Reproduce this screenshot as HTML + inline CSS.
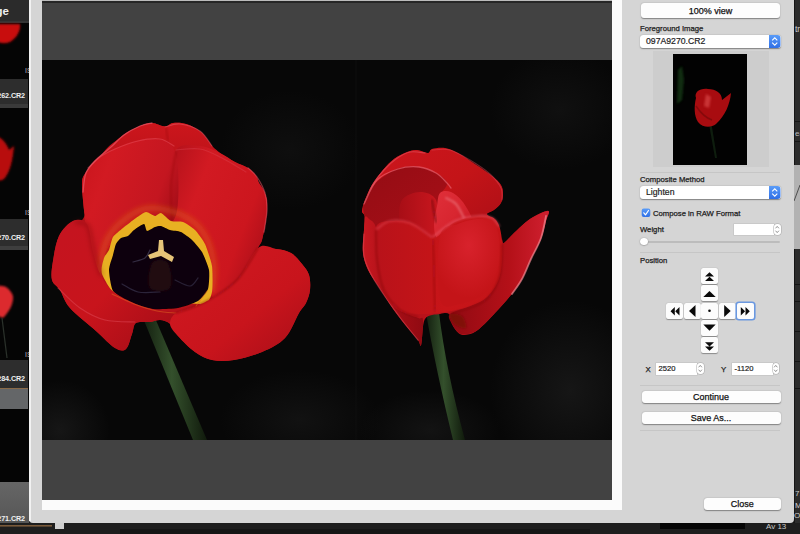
<!DOCTYPE html>
<html><head><meta charset="utf-8">
<style>
*{margin:0;padding:0;box-sizing:border-box}
html,body{width:800px;height:534px;overflow:hidden;background:#1e1e1e;font-family:"Liberation Sans",sans-serif}
.a{position:absolute}
.lab{position:absolute;left:0;width:28px;height:15px;background:#2d2d2d;overflow:hidden}.lab span{position:absolute;right:3px;top:0;color:#f0f0f0;font-size:7.2px;line-height:15px;white-space:nowrap;letter-spacing:-0.1px;font-weight:bold}
.btn{position:absolute;-webkit-text-stroke:0.25px #111;background:#fdfdfd;border-radius:3px;box-shadow:0 0.5px 1.2px rgba(0,0,0,.4);font-size:9px;color:#111;text-align:center;white-space:nowrap}
.lbl{position:absolute;-webkit-text-stroke:0.25px #1c1c1c;font-size:7.7px;color:#1c1c1c;white-space:nowrap;line-height:9px}
.sel{position:absolute;-webkit-text-stroke:0.2px #1e1e1e;background:#fff;border-radius:3px;box-shadow:0 0.5px 1.2px rgba(0,0,0,.4);font-size:8.7px;color:#1e1e1e;padding-left:6px;white-space:nowrap}
.sep{position:absolute;left:640px;width:140px;height:1px;background:#c6c6c6}
.pb{position:absolute;width:17px;height:16px;background:#fcfcfc;border-radius:2px;box-shadow:0 0.5px 1px rgba(0,0,0,.35)}
.inp{position:absolute;-webkit-text-stroke:0.2px #1e1e1e;background:#fff;box-shadow:0 0 0 0.5px #bdbdbd;font-size:7.6px;color:#1e1e1e;padding-left:3px;white-space:nowrap}
.stp{position:absolute;width:6.5px;background:#fff;border-radius:3px;box-shadow:0 0 0 0.5px #a8a8a8}
</style></head>
<body>
<!-- left filmstrip -->
<div class="a" style="left:0;top:0;width:29px;height:534px;background:#050505;overflow:hidden">
  <div class="a" style="left:0;top:0;width:29px;height:21px;background:#2b2b2b"></div><div class="a" style="left:0;top:21px;width:29px;height:2px;background:#353535"></div>
  <div class="a" style="right:20px;top:3.5px;color:#f0f0f0;font-size:11.5px;line-height:14px;font-weight:bold;white-space:nowrap">ge</div>
  <div class="lab" style="top:78.5px;height:25px"><span style="top:9.5px">262.CR2</span></div>
  <div class="a" style="left:0;top:103.5px;width:28px;height:4px;background:#3a3a3a"></div>
  <div class="lab" style="top:219px;height:27px"><span style="top:11px">270.CR2</span></div>
  <div class="a" style="left:0;top:246px;width:28px;height:3.5px;background:#3e3e3e"></div>
  <div class="lab" style="top:360px;height:28px"><span style="top:10.5px">284.CR2</span></div>
  <div class="a" style="left:0;top:388px;width:28px;height:1.2px;background:#8a6a48"></div>
  <div class="a" style="left:0;top:389.2px;width:28px;height:19.6px;background:#646668"></div>
  <div class="a" style="left:25px;top:66px;color:#bbb;font-size:7px;line-height:9px">IS</div>
  <div class="a" style="left:25px;top:208px;color:#bbb;font-size:7px;line-height:9px">IS</div>
  <div class="a" style="left:25px;top:350px;color:#bbb;font-size:7px;line-height:9px">IS</div>
  <div class="a" style="left:0;top:482px;width:29px;height:43px;background:linear-gradient(#666,#555)"></div>
  <div class="lab" style="top:511px;background:transparent"><span>271.CR2</span></div>
  <div class="a" style="left:0;top:525px;width:52px;height:2px;background:#6a4a30"></div>
</div>
<!-- right bg strip -->
<div class="a" style="left:793px;top:0;width:7px;height:534px;background:#2c2c2c"></div>
<div class="a" style="left:793px;top:0;width:2px;height:534px;background:#161616"></div>
<div class="a" style="left:795px;top:24px;color:#cfcfcf;font-size:8.5px;line-height:10px;white-space:nowrap">tre</div>
<div class="a" style="left:795px;top:121px;width:5px;height:1px;background:#151515"></div>
<div class="a" style="left:795px;top:141px;width:5px;height:1px;background:#151515"></div>
<div class="a" style="left:795px;top:129px;color:#bbb;font-size:8px;line-height:10px;white-space:nowrap">ea</div>
<div class="a" style="left:793px;top:165px;width:7px;height:84px;background:#b2b2b2"></div>
<svg class="a" style="left:793px;top:180px" width="7" height="25"><path d="M1,21 L7,5" stroke="#333" stroke-width="0.8"/></svg>
<div class="a" style="left:795px;top:284px;width:5px;height:1px;background:#141414"></div>
<div class="a" style="left:795px;top:301px;width:5px;height:1px;background:#141414"></div>
<div class="a" style="left:795px;top:331px;width:5px;height:1px;background:#141414"></div>
<div class="a" style="left:795px;top:361px;width:5px;height:1px;background:#141414"></div>
<div class="a" style="left:795px;top:388px;width:5px;height:1px;background:#141414"></div>
<div class="a" style="left:795px;top:489px;color:#d0d0d0;font-size:8px;line-height:10px;white-space:nowrap">71</div>
<div class="a" style="left:795px;top:501px;color:#d0d0d0;font-size:8px;line-height:10px;white-space:nowrap">M</div>
<div class="a" style="left:794px;top:511px;color:#d0d0d0;font-size:8px;line-height:10px;white-space:nowrap">O</div>
<div class="a" style="left:0;top:523px;width:800px;height:11px;background:#1e1e1e"></div>
<div class="a" style="left:120px;top:529px;width:470px;height:5px;background:#161616"></div><div class="a" style="left:660px;top:523px;width:85px;height:6px;background:#060606"></div>
<div class="a" style="left:766px;top:522px;color:#c8c8c8;font-size:8px;line-height:10px;white-space:nowrap">Av 13</div>

<!-- dialog -->
<div class="a" style="left:29px;top:0;width:765px;height:523px;background:#d5d5d5;border-radius:0 0 4px 4px"></div>
<div class="a" style="left:29px;top:0;width:1.5px;height:521px;background:#f2f2f2"></div>
<div class="a" style="left:42px;top:0;width:570px;height:500px;background:#424242"></div>
<div class="a" style="left:42px;top:1px;width:570px;height:1.5px;background:#262626"></div><div class="a" style="left:42px;top:0;width:580px;height:1px;background:#bbbbbb"></div>
<div class="a" style="left:612px;top:0;width:10px;height:510px;background:#fbfbfb"></div>
<div class="a" style="left:42px;top:500px;width:580px;height:10px;background:#fbfbfb"></div>

<div class="btn" style="left:641px;top:3.4px;width:139px;height:14.4px;line-height:16.6px">100% view</div>
<div class="lbl" style="left:640px;top:23.5px">Foreground Image</div>
<div class="sel" style="left:640px;top:35px;width:140.5px;height:13px;line-height:13px">097A9270.CR2</div>
<div class="a" style="left:653px;top:51px;width:116px;height:116px;background:#cdcdcd"></div>
<div class="a" style="left:673px;top:54px;width:74px;height:111px;background:#020202"></div>
<div class="sep" style="top:171.5px"></div>
<div class="lbl" style="left:640px;top:174.5px">Composite Method</div>
<div class="sel" style="left:640px;top:186px;width:140.5px;height:13px;line-height:13.5px">Lighten</div>
<div class="lbl" style="left:653px;top:208.5px">Compose in RAW Format</div>
<div class="lbl" style="left:640px;top:224.5px">Weight</div>
<div class="inp" style="left:733.5px;top:224px;width:40px;height:11px"></div>
<div class="stp" style="left:774px;top:224px;height:10.5px"></div>
<div class="a" style="left:644px;top:240.5px;width:136px;height:2px;background:#bcbcbc;border-radius:1px"></div>
<div class="a" style="left:640px;top:237.5px;width:7.5px;height:7.5px;background:#fff;border-radius:50%;box-shadow:0 0.3px 1.2px rgba(0,0,0,.55)"></div>
<div class="sep" style="top:252px"></div>
<div class="lbl" style="left:640px;top:255.5px">Position</div>

<div class="pb" style="left:701px;top:268px"></div>
<div class="pb" style="left:701px;top:285px"></div>
<div class="pb" style="left:665.5px;top:302.5px"></div>
<div class="pb" style="left:683.5px;top:302.5px"></div>
<div class="pb" style="left:701px;top:302.5px"></div>
<div class="pb" style="left:718.5px;top:302.5px"></div>
<div class="pb" style="left:736.5px;top:302.5px;box-shadow:0 0 0 1.6px #6a98e0"></div>
<div class="pb" style="left:701px;top:320px"></div>
<div class="pb" style="left:701px;top:337px"></div>

<div class="lbl" style="left:645.5px;top:364.5px;font-size:7.8px">X</div>
<div class="inp" style="left:655.5px;top:363px;width:41px;height:11.5px;line-height:12px">2520</div>
<div class="stp" style="left:697px;top:363px;height:11px"></div>
<div class="lbl" style="left:721px;top:364.5px;font-size:7.8px">Y</div>
<div class="inp" style="left:731.5px;top:363px;width:41px;height:11.5px;line-height:12px">-1120</div>
<div class="stp" style="left:772.5px;top:363px;height:11px"></div>
<div class="sep" style="top:384.5px"></div>
<div class="btn" style="left:641.5px;top:391px;width:139px;height:11.6px;line-height:12.2px">Continue</div>
<div class="btn" style="left:641.5px;top:412px;width:139px;height:11.8px;line-height:12.4px">Save As...</div>
<div class="sep" style="top:429.5px"></div>
<div class="btn" style="left:704px;top:498px;width:76.5px;height:12px;line-height:12px">Close</div>
<svg class="a" style="left:0;top:0" width="800" height="534" viewBox="0 0 800 534">
<defs>
<clipPath id="ph"><rect x="42" y="60" width="570" height="380"/></clipPath>
<radialGradient id="bgl" cx="0.35" cy="0.3" r="0.6"><stop offset="0" stop-color="#141414"/><stop offset="1" stop-color="#080808"/></radialGradient>
<linearGradient id="stem" x1="0" y1="0" x2="1" y2="0"><stop offset="0" stop-color="#142010"/><stop offset="0.45" stop-color="#34502c"/><stop offset="1" stop-color="#101a0c"/></linearGradient>
<filter id="bl1" x="-20%" y="-20%" width="140%" height="140%"><feGaussianBlur stdDeviation="1.2"/></filter>
<filter id="bl2" x="-20%" y="-20%" width="140%" height="140%"><feGaussianBlur stdDeviation="2.5"/></filter>
<filter id="bgb" x="-30%" y="-30%" width="160%" height="160%"><feGaussianBlur stdDeviation="9"/></filter>
<radialGradient id="soft"><stop offset="0" stop-color="#161616"/><stop offset="1" stop-color="#161616" stop-opacity="0"/></radialGradient>
<filter id="bl6" x="-30%" y="-30%" width="160%" height="160%"><feGaussianBlur stdDeviation="6"/></filter>
<filter id="bl05"><feGaussianBlur stdDeviation="0.6"/></filter>
</defs>
<g clip-path="url(#ph)">
<rect x="42" y="60" width="570" height="380" fill="#070707"/>
<ellipse cx="290" cy="150" rx="70" ry="60" fill="url(#soft)" opacity="0.5"/>
<ellipse cx="60" cy="430" rx="50" ry="50" fill="url(#soft)"/>
<ellipse cx="300" cy="420" rx="80" ry="50" fill="url(#soft)" opacity="0.7"/>
<ellipse cx="570" cy="390" rx="80" ry="90" fill="url(#soft)"/>
<ellipse cx="430" cy="430" rx="70" ry="40" fill="url(#soft)" opacity="0.8"/>
<ellipse cx="560" cy="110" rx="70" ry="60" fill="url(#soft)" opacity="0.6"/>
<rect x="355.5" y="60" width="1" height="380" fill="#151515" opacity="0.5"/>
<path d="M143,318 L155,318 L207,440 L193,440 Z" fill="url(#stem)"/>
<path fill="#b8121a" d="M165.0,126.5 C168.5,126.5 169.5,123.4 173.0,123.0 C176.5,122.6 181.3,122.5 186.0,124.0 C190.7,125.5 196.7,128.3 201.0,132.0 C205.3,135.7 208.8,142.5 212.0,146.0 C215.2,149.5 216.2,150.3 220.0,153.0 C223.8,155.7 230.3,159.5 235.0,162.0 C239.7,164.5 244.5,165.7 248.0,168.0 C251.5,170.3 254.2,173.5 256.0,176.0 C257.8,178.5 257.7,180.5 259.0,183.0 C260.3,185.5 262.7,187.8 264.0,191.0 C265.3,194.2 266.7,197.3 267.0,202.0 C267.3,206.7 266.8,212.7 266.0,219.0 C265.2,225.3 263.3,235.2 262.0,240.0 C260.7,244.8 255.7,246.5 258.0,248.0 C260.3,249.5 270.5,248.2 276.0,249.0 C281.5,249.8 286.7,250.5 291.0,253.0 C295.3,255.5 299.0,260.3 302.0,264.0 C305.0,267.7 307.7,270.7 309.0,275.0 C310.3,279.3 310.5,285.3 310.0,290.0 C309.5,294.7 307.8,299.2 306.0,303.0 C304.2,306.8 302.5,307.2 299.0,313.0 C295.5,318.8 291.2,331.5 285.0,338.0 C278.8,344.5 270.5,348.3 262.0,352.0 C253.5,355.7 242.3,358.7 234.0,360.0 C225.7,361.3 218.5,361.3 212.0,360.0 C205.5,358.7 200.7,356.0 195.0,352.0 C189.3,348.0 182.2,340.7 178.0,336.0 C173.8,331.3 173.0,326.7 170.0,324.0 C167.0,321.3 163.3,320.3 160.0,320.0 C156.7,319.7 154.0,321.5 150.0,322.0 C146.0,322.5 139.0,321.0 136.0,323.0 C133.0,325.0 133.7,329.7 132.0,334.0 C130.3,338.3 128.8,346.7 126.0,349.0 C123.2,351.3 120.0,351.0 115.0,348.0 C110.0,345.0 103.5,337.7 96.0,331.0 C88.5,324.3 76.0,314.8 70.0,308.0 C64.0,301.2 63.0,294.7 60.0,290.0 C57.0,285.3 53.2,284.8 52.0,280.0 C50.8,275.2 51.8,268.3 53.0,261.0 C54.2,253.7 55.7,242.7 59.0,236.0 C62.3,229.3 69.5,223.3 73.0,221.0 C76.5,218.7 78.0,223.0 80.0,222.0 C82.0,221.0 84.3,217.0 85.0,215.0 C85.7,213.0 84.5,215.3 84.0,210.0 C83.5,204.7 81.8,189.0 82.0,183.0 C82.2,177.0 83.0,177.7 85.0,174.0 C87.0,170.3 90.0,165.3 94.0,161.0 C98.0,156.7 104.3,152.2 109.0,148.0 C113.7,143.8 116.8,139.7 122.0,136.0 C127.2,132.3 135.0,128.2 140.0,126.0 C145.0,123.8 147.8,122.9 152.0,123.0 C156.2,123.1 161.5,126.5 165.0,126.5 Z"/>
<path fill="url(#gA)" fill-opacity="1" d="M100.0,160.0 C102.0,149.3 115.3,141.7 122.0,136.0 C128.7,130.3 135.0,128.2 140.0,126.0 C145.0,123.8 147.8,122.9 152.0,123.0 C156.2,123.1 161.5,126.5 165.0,126.5 C168.5,126.5 169.5,123.4 173.0,123.0 C176.5,122.6 181.3,122.5 186.0,124.0 C190.7,125.5 196.7,128.3 201.0,132.0 C205.3,135.7 208.5,141.3 212.0,146.0 C215.5,150.7 221.5,151.0 222.0,160.0 C222.5,169.0 225.3,190.8 215.0,200.0 C204.7,209.2 177.5,215.0 160.0,215.0 C142.5,215.0 120.0,209.2 110.0,200.0 C100.0,190.8 98.0,170.7 100.0,160.0 Z"/>
<path fill="url(#gC)" fill-opacity="1" d="M176.0,150.0 C181.2,142.5 192.7,145.5 200.0,146.0 C207.3,146.5 214.2,150.3 220.0,153.0 C225.8,155.7 230.3,159.5 235.0,162.0 C239.7,164.5 244.5,165.7 248.0,168.0 C251.5,170.3 254.2,173.5 256.0,176.0 C257.8,178.5 257.7,180.5 259.0,183.0 C260.3,185.5 262.7,187.8 264.0,191.0 C265.3,194.2 266.7,197.3 267.0,202.0 C267.3,206.7 266.8,212.7 266.0,219.0 C265.2,225.3 263.3,235.2 262.0,240.0 C260.7,244.8 261.7,241.3 258.0,248.0 C254.3,254.7 247.3,271.7 240.0,280.0 C232.7,288.3 220.7,301.0 214.0,298.0 C207.3,295.0 205.3,272.3 200.0,262.0 C194.7,251.7 187.0,242.3 182.0,236.0 C177.0,229.7 172.2,231.5 170.0,224.0 C167.8,216.5 168.0,203.3 169.0,191.0 C170.0,178.7 170.8,157.5 176.0,150.0 Z"/>
<path fill="url(#gB)" fill-opacity="1" d="M84.0,210.0 C83.3,201.8 81.7,189.3 82.0,183.0 C82.3,176.7 83.7,175.8 86.0,172.0 C88.3,168.2 91.7,163.7 96.0,160.0 C100.3,156.3 105.5,153.2 112.0,150.0 C118.5,146.8 127.3,142.8 135.0,141.0 C142.7,139.2 151.8,138.2 158.0,139.0 C164.2,139.8 168.7,140.8 172.0,146.0 C175.3,151.2 177.3,158.5 178.0,170.0 C178.7,181.5 179.0,205.7 176.0,215.0 C173.0,224.3 167.7,224.2 160.0,226.0 C152.3,227.8 138.7,222.3 130.0,226.0 C121.3,229.7 113.0,240.3 108.0,248.0 C103.0,255.7 103.0,269.7 100.0,272.0 C97.0,274.3 92.3,268.7 90.0,262.0 C87.7,255.3 87.0,240.7 86.0,232.0 C85.0,223.3 84.7,218.2 84.0,210.0 Z"/>
<path fill="none" stroke="#ec6474" stroke-width="1.3" stroke-opacity="0.6" stroke-linecap="round" filter="url(#bl05)" d="M83.0,192.0 C83.5,188.8 83.8,178.3 86.0,173.0 C88.2,167.7 91.8,164.3 96.0,160.0 C100.2,155.7 106.3,151.2 111.0,147.0 C115.7,142.8 119.2,138.5 124.0,135.0 C128.8,131.5 135.3,128.0 140.0,126.0 C144.7,124.0 150.0,123.5 152.0,123.0"/>
<path fill="none" stroke="#e85462" stroke-width="1.2" stroke-opacity="0.45" stroke-linecap="round" filter="url(#bl05)" d="M88.0,168.0 C90.0,166.2 95.5,160.2 100.0,157.0 C104.5,153.8 108.7,151.7 115.0,149.0 C121.3,146.3 130.5,142.7 138.0,141.0 C145.5,139.3 154.0,138.2 160.0,139.0 C166.0,139.8 171.7,144.8 174.0,146.0"/>
<path fill="none" stroke="#e04a58" stroke-width="1.1" stroke-opacity="0.35" stroke-linecap="round" filter="url(#bl05)" d="M176.0,150.0 C180.0,149.8 192.3,147.7 200.0,149.0 C207.7,150.3 214.3,154.2 222.0,158.0 C229.7,161.8 242.0,169.7 246.0,172.0"/>
<path fill="none" stroke="#e85462" stroke-width="1.3" stroke-opacity="0.55" stroke-linecap="round" filter="url(#bl05)" d="M248.0,168.0 C249.5,169.5 254.2,172.8 257.0,177.0 C259.8,181.2 263.3,187.5 265.0,193.0 C266.7,198.5 267.2,203.5 267.0,210.0 C266.8,216.5 264.5,228.3 264.0,232.0"/>
<path fill="none" stroke="#ec6474" stroke-width="1.1" stroke-opacity="0.45" stroke-linecap="round" filter="url(#bl05)" d="M165.0,127.0 C167.5,126.5 174.2,123.3 180.0,124.0 C185.8,124.7 194.7,127.3 200.0,131.0 C205.3,134.7 210.0,143.5 212.0,146.0"/>
<path fill="none" stroke="#8a0a12" stroke-width="1.2" stroke-opacity="0.5" stroke-linecap="round" filter="url(#bl1)" d="M176.0,152.0 C175.2,157.5 171.7,173.3 171.0,185.0 C170.3,196.7 171.8,215.8 172.0,222.0"/>
<path fill="none" stroke="#8a0a12" stroke-width="1.4" stroke-opacity="0.45" stroke-linecap="round" filter="url(#bl1)" d="M166.0,128.0 C166.3,130.0 167.7,138.0 168.0,140.0"/>
<path fill="none" stroke="#e06a18" stroke-width="5" stroke-opacity="0.45" filter="url(#bl2)" d="M100.0,276.0 C100.3,272.7 100.7,262.3 102.0,256.0 C103.3,249.7 105.2,243.3 108.0,238.0 C110.8,232.7 114.3,228.3 119.0,224.0 C123.7,219.7 130.8,214.7 136.0,212.0 C141.2,209.3 145.0,208.3 150.0,208.0 C155.0,207.7 160.7,208.8 166.0,210.0 C171.3,211.2 176.7,212.3 182.0,215.0 C187.3,217.7 193.5,221.2 198.0,226.0 C202.5,230.8 206.3,237.0 209.0,244.0 C211.7,251.0 213.5,260.0 214.0,268.0 C214.5,276.0 212.3,288.0 212.0,292.0"/>
<path fill="#e8b020" filter="url(#bl05)" d="M102.0,274.0 C100.4,269.8 103.3,260.4 104.0,258.0 C104.7,255.6 108.1,252.1 109.0,250.0 C109.9,247.9 111.6,239.2 113.0,237.0 C114.4,234.8 120.7,229.9 123.0,228.0 C125.3,226.1 133.7,219.6 136.0,218.0 C138.3,216.4 144.1,212.2 146.0,212.0 C147.9,211.8 153.5,215.9 155.0,216.0 C156.5,216.1 159.4,212.5 161.0,213.0 C162.6,213.5 168.8,220.1 171.0,221.0 C173.2,221.9 180.6,221.1 183.0,222.0 C185.4,222.9 192.8,227.8 195.0,230.0 C197.2,232.2 203.3,240.4 205.0,244.0 C206.7,247.6 211.3,261.2 212.0,266.0 C212.7,270.8 212.8,288.2 212.0,292.0 C211.2,295.8 209.2,303.2 204.0,304.0 C198.8,304.8 168.4,300.4 160.0,300.0 C151.6,299.6 125.8,302.6 120.0,300.0 C114.2,297.4 103.6,278.2 102.0,274.0 Z"/>
<path fill="#0c0507" filter="url(#bl05)" d="M109.0,270.0 C109.0,266.4 112.3,257.6 113.0,255.0 C113.7,252.4 115.2,245.7 116.0,244.0 C116.8,242.3 119.8,238.8 121.0,238.0 C122.2,237.2 126.7,236.8 128.0,236.0 C129.3,235.2 132.4,231.2 134.0,230.0 C135.6,228.8 142.7,223.9 144.0,224.0 C145.3,224.1 145.9,230.7 147.0,231.0 C148.1,231.3 153.6,227.5 155.0,227.0 C156.4,226.5 159.5,225.7 161.0,226.0 C162.5,226.3 168.0,229.4 170.0,230.0 C172.0,230.6 178.8,231.0 181.0,232.0 C183.2,233.0 189.9,238.0 192.0,240.0 C194.1,242.0 200.3,249.0 202.0,252.0 C203.7,255.0 208.4,266.3 209.0,270.0 C209.6,273.7 209.1,285.9 208.0,289.0 C206.9,292.1 201.0,299.1 198.0,301.0 C195.0,302.9 182.6,307.2 178.0,308.0 C173.4,308.8 156.8,309.5 152.0,309.0 C147.2,308.5 133.9,304.8 130.0,303.0 C126.1,301.2 115.1,294.3 113.0,291.0 C110.9,287.7 109.0,273.6 109.0,270.0 Z"/>
<path fill="#2a0c0e" fill-opacity="0.7" filter="url(#bl1)" d="M152.0,263.0 C155.0,258.8 165.0,258.8 168.0,263.0 C171.0,267.2 173.0,283.8 170.0,288.0 C167.0,292.2 153.0,292.2 150.0,288.0 C147.0,283.8 149.0,267.2 152.0,263.0 Z"/>
<path fill="#e5c478" d="M159,240 L163,240 L164,251 L174,257 L172,262 L161,256 L150,259 L148,255 L158,251 Z"/>
<path fill="none" stroke="#5a5a78" stroke-width="1.2" stroke-opacity="0.5" stroke-linecap="round" filter="url(#bl05)" d="M133.0,262.0 C135.0,261.3 142.2,260.0 145.0,258.0 C147.8,256.0 149.2,251.3 150.0,250.0"/>
<path fill="none" stroke="#505070" stroke-width="1.2" stroke-opacity="0.45" stroke-linecap="round" filter="url(#bl05)" d="M122.0,284.0 C124.7,285.3 131.7,290.7 138.0,292.0 C144.3,293.3 156.3,292.0 160.0,292.0"/>
<path fill="none" stroke="#505070" stroke-width="1.2" stroke-opacity="0.4" stroke-linecap="round" filter="url(#bl05)" d="M175.0,280.0 C177.5,281.0 186.2,286.3 190.0,286.0 C193.8,285.7 196.7,279.3 198.0,278.0"/>
<path fill="url(#gD)" fill-opacity="1" d="M73.0,221.0 C77.7,219.0 83.7,218.8 87.0,224.0 C90.3,229.2 90.7,243.3 93.0,252.0 C95.3,260.7 97.5,269.3 101.0,276.0 C104.5,282.7 108.2,287.3 114.0,292.0 C119.8,296.7 128.8,301.0 136.0,304.0 C143.2,307.0 150.3,308.5 157.0,310.0 C163.7,311.5 173.5,311.0 176.0,313.0 C178.5,315.0 174.7,320.8 172.0,322.0 C169.3,323.2 163.7,320.0 160.0,320.0 C156.3,320.0 154.0,321.5 150.0,322.0 C146.0,322.5 139.0,321.0 136.0,323.0 C133.0,325.0 133.7,329.7 132.0,334.0 C130.3,338.3 128.8,346.7 126.0,349.0 C123.2,351.3 120.0,351.0 115.0,348.0 C110.0,345.0 103.5,337.7 96.0,331.0 C88.5,324.3 76.0,314.8 70.0,308.0 C64.0,301.2 63.0,294.7 60.0,290.0 C57.0,285.3 53.2,284.8 52.0,280.0 C50.8,275.2 51.8,268.3 53.0,261.0 C54.2,253.7 55.7,242.7 59.0,236.0 C62.3,229.3 68.3,223.0 73.0,221.0 Z"/>
<path fill="none" stroke="#e04a58" stroke-width="1.1" stroke-opacity="0.5" stroke-linecap="round" filter="url(#bl05)" d="M58.0,288.0 C61.7,291.3 72.2,302.7 80.0,308.0 C87.8,313.3 95.8,317.7 105.0,320.0 C114.2,322.3 130.0,321.7 135.0,322.0"/>
<path fill="none" stroke="#6a0810" stroke-width="2.5" stroke-opacity="0.55" stroke-linecap="round" filter="url(#bl2)" d="M76.0,222.0 C78.0,222.7 85.0,221.0 88.0,226.0 C91.0,231.0 91.8,243.8 94.0,252.0 C96.2,260.2 99.8,271.2 101.0,275.0"/>
<path fill="none" stroke="#e06020" stroke-width="1.1" stroke-opacity="0.55" stroke-linecap="round" filter="url(#bl05)" d="M112.0,294.0 C115.7,295.7 126.5,301.2 134.0,304.0 C141.5,306.8 150.0,309.5 157.0,311.0 C164.0,312.5 172.8,312.7 176.0,313.0"/>
<path fill="url(#gE)" fill-opacity="1" d="M258.0,248.0 C264.3,243.0 270.5,248.2 276.0,249.0 C281.5,249.8 286.7,250.5 291.0,253.0 C295.3,255.5 299.0,260.3 302.0,264.0 C305.0,267.7 307.7,270.7 309.0,275.0 C310.3,279.3 310.5,285.3 310.0,290.0 C309.5,294.7 307.8,299.2 306.0,303.0 C304.2,306.8 302.5,307.2 299.0,313.0 C295.5,318.8 291.2,331.5 285.0,338.0 C278.8,344.5 270.5,348.3 262.0,352.0 C253.5,355.7 242.3,358.7 234.0,360.0 C225.7,361.3 218.5,361.3 212.0,360.0 C205.5,358.7 200.7,356.0 195.0,352.0 C189.3,348.0 182.2,340.7 178.0,336.0 C173.8,331.3 170.3,327.8 170.0,324.0 C169.7,320.2 171.7,316.0 176.0,313.0 C180.3,310.0 189.7,308.7 196.0,306.0 C202.3,303.3 207.0,301.5 214.0,297.0 C221.0,292.5 230.7,287.2 238.0,279.0 C245.3,270.8 251.7,253.0 258.0,248.0 Z"/>
<path fill="none" stroke="#7a0810" stroke-width="1.4" stroke-opacity="0.6" stroke-linecap="round" filter="url(#bl1)" d="M258.0,248.0 C254.7,253.2 245.3,270.8 238.0,279.0 C230.7,287.2 221.0,292.5 214.0,297.0 C207.0,301.5 202.3,303.3 196.0,306.0 C189.7,308.7 179.3,311.8 176.0,313.0"/>
<path fill="none" stroke="#e06020" stroke-width="1.1" stroke-opacity="0.5" stroke-linecap="round" filter="url(#bl05)" d="M196.0,306.0 C197.8,303.5 205.2,293.5 207.0,291.0"/>
<path d="M426,313 L439,313 Q446,370 465,440 L453,440 Q436,370 426,313 Z" fill="url(#stem)"/>
<path fill="#b8121a" d="M428.0,153.0 C430.5,152.8 429.2,150.2 432.0,149.4 C434.8,148.6 440.7,147.7 445.0,148.4 C449.3,149.1 452.8,150.8 458.0,153.5 C463.2,156.2 470.4,160.9 476.0,164.7 C481.6,168.4 487.6,172.6 491.7,176.0 C495.8,179.4 498.8,182.0 500.7,185.0 C502.6,188.0 503.0,191.0 503.0,194.0 C503.0,197.0 502.2,200.4 500.7,203.0 C499.2,205.6 496.3,207.9 494.0,209.7 C491.7,211.5 487.2,212.4 487.0,214.0 C486.8,215.6 491.0,216.5 493.0,219.0 C495.0,221.5 497.5,225.3 499.0,229.0 C500.5,232.7 501.2,238.7 502.0,241.0 C502.8,243.3 502.0,244.3 504.0,243.0 C506.0,241.7 509.7,237.0 514.0,233.0 C518.3,229.0 524.4,222.7 530.0,219.0 C535.6,215.3 545.3,210.5 547.9,210.8 C550.5,211.1 546.8,216.3 545.6,221.0 C544.5,225.7 543.5,232.5 541.0,238.9 C538.5,245.3 534.1,252.4 530.9,259.2 C527.7,265.9 525.3,273.4 521.9,279.4 C518.5,285.4 515.2,289.6 510.7,295.2 C506.2,300.8 500.2,307.5 495.0,313.1 C489.8,318.7 483.7,325.3 479.2,328.9 C474.7,332.5 471.4,333.8 468.0,334.5 C464.6,335.2 461.6,335.1 459.0,333.4 C456.4,331.7 453.9,327.6 452.2,324.4 C450.5,321.2 451.0,315.7 449.0,314.0 C447.0,312.3 444.0,313.2 440.0,314.0 C436.0,314.8 428.1,313.9 425.0,319.0 C421.9,324.1 422.5,341.1 421.3,344.6 C420.1,348.1 420.4,343.0 418.0,340.0 C415.6,337.0 410.8,331.8 406.7,326.6 C402.6,321.4 397.7,315.1 393.2,308.7 C388.7,302.3 383.8,294.8 379.7,288.4 C375.6,282.0 371.3,276.4 368.5,270.4 C365.7,264.4 363.6,259.2 362.9,252.5 C362.1,245.8 363.6,235.9 364.0,230.0 C364.4,224.1 365.6,219.9 365.3,216.8 C365.1,213.7 362.5,214.0 362.5,211.2 C362.5,208.4 363.7,204.4 365.3,200.0 C366.9,195.6 368.9,190.0 371.9,185.0 C374.8,180.0 379.3,174.4 383.0,170.0 C386.7,165.6 390.2,161.7 394.3,158.7 C398.4,155.7 403.6,153.6 407.4,152.2 C411.1,150.8 413.4,150.2 416.8,150.3 C420.2,150.4 425.5,153.2 428.0,153.0 Z"/>
<path fill="url(#rA)" fill-opacity="1" d="M365.0,216.0 C362.0,211.2 362.0,213.7 362.0,211.0 C362.0,208.3 363.3,204.3 365.0,200.0 C366.7,195.7 369.0,190.0 372.0,185.0 C375.0,180.0 379.3,174.3 383.0,170.0 C386.7,165.7 390.0,162.0 394.0,159.0 C398.0,156.0 403.2,153.5 407.0,152.0 C410.8,150.5 413.5,149.8 417.0,150.0 C420.5,150.2 425.5,153.2 428.0,153.0 C430.5,152.8 429.2,149.8 432.0,149.0 C434.8,148.2 440.7,147.3 445.0,148.0 C449.3,148.7 452.8,150.2 458.0,153.0 C463.2,155.8 470.3,161.2 476.0,165.0 C481.7,168.8 487.8,172.7 492.0,176.0 C496.2,179.3 499.2,182.0 501.0,185.0 C502.8,188.0 503.0,191.0 503.0,194.0 C503.0,197.0 502.5,200.3 501.0,203.0 C499.5,205.7 496.7,208.2 494.0,210.0 C491.3,211.8 487.7,213.0 485.0,214.0 C482.3,215.0 485.5,211.7 478.0,216.0 C470.5,220.3 456.3,236.0 440.0,240.0 C423.7,244.0 392.5,244.0 380.0,240.0 C367.5,236.0 368.0,220.8 365.0,216.0 Z"/>
<path fill="none" stroke="#e85866" stroke-width="1.2" stroke-opacity="0.55" stroke-linecap="round" filter="url(#bl05)" d="M365.0,205.0 C366.2,201.8 368.8,191.8 372.0,186.0 C375.2,180.2 380.0,174.5 384.0,170.0 C388.0,165.5 391.7,162.0 396.0,159.0 C400.3,156.0 405.2,153.0 410.0,152.0 C414.8,151.0 422.5,152.8 425.0,153.0"/>
<path fill="none" stroke="#e04a58" stroke-width="1.1" stroke-opacity="0.45" stroke-linecap="round" filter="url(#bl05)" d="M432.0,150.0 C435.0,150.0 443.7,148.3 450.0,150.0 C456.3,151.7 463.3,156.0 470.0,160.0 C476.7,164.0 484.8,169.3 490.0,174.0 C495.2,178.7 499.0,183.7 501.0,188.0 C503.0,192.3 501.8,198.0 502.0,200.0"/>
<path fill="url(#rB)" fill-opacity="1" d="M364.0,214.0 C363.3,210.2 362.5,207.7 364.0,203.0 C365.5,198.3 369.3,190.7 373.0,186.0 C376.7,181.3 381.5,178.0 386.0,175.0 C390.5,172.0 394.5,169.3 400.0,168.0 C405.5,166.7 413.0,166.2 419.0,167.0 C425.0,167.8 431.3,170.3 436.0,173.0 C440.7,175.7 446.3,179.2 447.0,183.0 C447.7,186.8 441.8,190.8 440.0,196.0 C438.2,201.2 437.7,208.0 436.0,214.0 C434.3,220.0 434.3,228.3 430.0,232.0 C425.7,235.7 417.5,236.5 410.0,236.0 C402.5,235.5 392.0,230.7 385.0,229.0 C378.0,227.3 371.5,228.5 368.0,226.0 C364.5,223.5 364.7,217.8 364.0,214.0 Z"/>
<path fill="none" stroke="#ea6472" stroke-width="1.3" stroke-opacity="0.65" stroke-linecap="round" filter="url(#bl05)" d="M364.0,204.0 C366.2,200.0 371.3,185.8 377.0,180.0 C382.7,174.2 391.0,171.2 398.0,169.0 C405.0,166.8 412.7,166.3 419.0,167.0 C425.3,167.7 431.3,170.3 436.0,173.0 C440.7,175.7 444.5,180.5 447.0,183.0 C449.5,185.5 450.3,187.2 451.0,188.0"/>
<path fill="url(#rC)" fill-opacity="1" d="M402.0,200.0 C405.3,195.0 414.3,192.0 420.0,192.0 C425.7,192.0 433.3,194.3 436.0,200.0 C438.7,205.7 436.7,219.3 436.0,226.0 C435.3,232.7 436.3,237.7 432.0,240.0 C427.7,242.3 415.3,243.0 410.0,240.0 C404.7,237.0 401.3,228.7 400.0,222.0 C398.7,215.3 398.7,205.0 402.0,200.0 Z"/>
<path fill="url(#rD)" fill-opacity="1" d="M437.0,206.0 C438.0,200.8 437.7,195.3 440.0,193.0 C442.3,190.7 447.3,190.7 451.0,192.0 C454.7,193.3 458.7,197.0 462.0,201.0 C465.3,205.0 469.3,211.8 471.0,216.0 C472.7,220.2 474.5,222.7 472.0,226.0 C469.5,229.3 461.7,233.8 456.0,236.0 C450.3,238.2 441.7,241.0 438.0,239.0 C434.3,237.0 434.2,229.5 434.0,224.0 C433.8,218.5 436.0,211.2 437.0,206.0 Z"/>
<path fill="none" stroke="#f08890" stroke-width="2" stroke-opacity="0.55" stroke-linecap="round" filter="url(#bl1)" d="M446.0,198.0 C447.7,199.0 453.0,200.7 456.0,204.0 C459.0,207.3 462.7,215.7 464.0,218.0"/>
<path fill="none" stroke="#500810" stroke-width="1.6" stroke-opacity="0.6" stroke-linecap="round" filter="url(#bl1)" d="M432.0,200.0 C432.3,202.0 433.3,208.3 434.0,212.0 C434.7,215.7 435.7,220.3 436.0,222.0"/>
<path fill="url(#rE)" fill-opacity="1" d="M365.0,217.0 C365.8,215.2 367.2,217.2 369.0,219.0 C370.8,220.8 374.7,221.2 376.0,228.0 C377.3,234.8 375.7,249.7 377.0,260.0 C378.3,270.3 380.2,281.7 384.0,290.0 C387.8,298.3 394.3,305.3 400.0,310.0 C405.7,314.7 414.2,316.3 418.0,318.0 C421.8,319.7 422.5,315.5 423.0,320.0 C423.5,324.5 421.8,341.7 421.0,345.0 C420.2,348.3 420.3,343.0 418.0,340.0 C415.7,337.0 411.2,332.2 407.0,327.0 C402.8,321.8 397.5,315.5 393.0,309.0 C388.5,302.5 384.2,294.5 380.0,288.0 C375.8,281.5 370.8,276.0 368.0,270.0 C365.2,264.0 363.7,258.7 363.0,252.0 C362.3,245.3 363.7,235.8 364.0,230.0 C364.3,224.2 364.2,218.8 365.0,217.0 Z"/>
<path fill="none" stroke="#e04c5a" stroke-width="1.2" stroke-opacity="0.5" stroke-linecap="round" filter="url(#bl05)" d="M364.0,234.0 C364.0,237.7 362.7,249.0 364.0,256.0 C365.3,263.0 368.3,269.0 372.0,276.0 C375.7,283.0 381.0,290.7 386.0,298.0 C391.0,305.3 396.7,313.0 402.0,320.0 C407.3,327.0 415.3,336.7 418.0,340.0"/>
<path fill="url(#rF)" fill-opacity="1" d="M502.0,241.0 C502.7,235.7 502.0,244.3 504.0,243.0 C506.0,241.7 509.7,237.0 514.0,233.0 C518.3,229.0 524.3,222.7 530.0,219.0 C535.7,215.3 545.3,210.7 548.0,211.0 C550.7,211.3 547.2,216.3 546.0,221.0 C544.8,225.7 543.5,232.7 541.0,239.0 C538.5,245.3 534.2,252.3 531.0,259.0 C527.8,265.7 525.3,273.0 522.0,279.0 C518.7,285.0 515.5,289.3 511.0,295.0 C506.5,300.7 500.3,307.3 495.0,313.0 C489.7,318.7 483.5,325.5 479.0,329.0 C474.5,332.5 471.3,333.3 468.0,334.0 C464.7,334.7 461.7,334.7 459.0,333.0 C456.3,331.3 453.5,327.2 452.0,324.0 C450.5,320.8 447.0,317.0 450.0,314.0 C453.0,311.0 463.7,309.0 470.0,306.0 C476.3,303.0 483.0,301.2 488.0,296.0 C493.0,290.8 497.7,284.2 500.0,275.0 C502.3,265.8 501.3,246.3 502.0,241.0 Z"/>
<path fill="none" stroke="#f0909a" stroke-width="1.8" stroke-opacity="0.65" stroke-linecap="round" filter="url(#bl05)" d="M546.0,216.0 C545.2,219.7 543.5,230.8 541.0,238.0 C538.5,245.2 534.2,252.2 531.0,259.0 C527.8,265.8 525.2,273.2 522.0,279.0 C518.8,284.8 513.7,291.5 512.0,294.0"/>
<path fill="url(#rG)" d="M376.0,227.0 C378.7,220.2 387.7,221.5 394.0,221.0 C400.3,220.5 407.5,221.2 414.0,224.0 C420.5,226.8 426.2,238.3 433.0,238.0 C439.8,237.7 447.0,225.7 455.0,222.0 C463.0,218.3 474.2,216.3 481.0,216.0 C487.8,215.7 492.5,215.8 496.0,220.0 C499.5,224.2 501.3,231.8 502.0,241.0 C502.7,250.2 502.3,265.8 500.0,275.0 C497.7,284.2 493.0,290.8 488.0,296.0 C483.0,301.2 477.2,303.3 470.0,306.0 C462.8,308.7 453.3,310.7 445.0,312.0 C436.7,313.3 427.5,314.2 420.0,314.0 C412.5,313.8 405.7,314.0 400.0,311.0 C394.3,308.0 389.7,304.2 386.0,296.0 C382.3,287.8 379.7,273.5 378.0,262.0 C376.3,250.5 373.3,233.8 376.0,227.0 Z"/>
<path fill="url(#rH)" fill-opacity="1" d="M440.0,236.0 C443.0,223.3 451.3,226.8 458.0,224.0 C464.7,221.2 473.7,218.7 480.0,219.0 C486.3,219.3 492.8,218.8 496.0,226.0 C499.2,233.2 500.7,251.0 499.0,262.0 C497.3,273.0 492.5,285.0 486.0,292.0 C479.5,299.0 467.7,302.7 460.0,304.0 C452.3,305.3 443.3,311.3 440.0,300.0 C436.7,288.7 437.0,248.7 440.0,236.0 Z"/>
<path fill="none" stroke="#e85060" stroke-width="2.2" stroke-opacity="0.45" stroke-linecap="round" filter="url(#bl1)" d="M377.0,229.0 C379.2,227.7 384.5,222.0 390.0,221.0 C395.5,220.0 403.0,220.3 410.0,223.0 C417.0,225.7 428.3,234.7 432.0,237.0"/>
<path fill="none" stroke="#ec6070" stroke-width="2.2" stroke-opacity="0.5" stroke-linecap="round" filter="url(#bl1)" d="M434.0,236.0 C437.5,233.5 447.7,224.3 455.0,221.0 C462.3,217.7 471.8,216.5 478.0,216.0 C484.2,215.5 488.5,216.3 492.0,218.0 C495.5,219.7 497.8,224.7 499.0,226.0"/>
<path fill="none" stroke="#8a0a12" stroke-width="1.4" stroke-opacity="0.6" stroke-linecap="round" filter="url(#bl1)" d="M433.0,240.0 C433.2,245.0 433.7,258.2 434.0,270.0 C434.3,281.8 434.8,304.2 435.0,311.0"/>
<path fill="none" stroke="#7a0810" stroke-width="1.3" stroke-opacity="0.6" stroke-linecap="round" filter="url(#bl1)" d="M376.0,230.0 C376.2,235.0 375.7,250.0 377.0,260.0 C378.3,270.0 380.2,281.7 384.0,290.0 C387.8,298.3 394.3,305.5 400.0,310.0 C405.7,314.5 415.0,315.8 418.0,317.0"/>
<path fill="none" stroke="#7a0810" stroke-width="1.3" stroke-opacity="0.6" stroke-linecap="round" filter="url(#bl1)" d="M502.0,244.0 C501.7,249.2 502.3,266.0 500.0,275.0 C497.7,284.0 493.0,292.5 488.0,298.0 C483.0,303.5 476.0,305.5 470.0,308.0 C464.0,310.5 455.0,312.2 452.0,313.0"/>
<path fill="#701008" fill-opacity="0.6" filter="url(#bl1)" d="M450.0,314.0 C451.3,312.7 459.3,313.7 462.0,316.0 C464.7,318.3 467.3,326.7 466.0,328.0 C464.7,329.3 456.7,326.3 454.0,324.0 C451.3,321.7 448.7,315.3 450.0,314.0 Z"/>
</g>
<defs><linearGradient id="gA" x1="0" y1="0" x2="0" y2="1"><stop offset="0" stop-color="#cc161c"/><stop offset="1" stop-color="#a80e16"/></linearGradient><linearGradient id="gC" x1="0" y1="0" x2="1" y2="0.6"><stop offset="0" stop-color="#b0101a"/><stop offset="0.35" stop-color="#d21a22"/><stop offset="0.8" stop-color="#cc161e"/><stop offset="1" stop-color="#b2101a"/></linearGradient><linearGradient id="gB" x1="0" y1="0" x2="1" y2="0.5"><stop offset="0" stop-color="#c8141c"/><stop offset="0.3" stop-color="#d21a22"/><stop offset="0.8" stop-color="#c41620"/><stop offset="1" stop-color="#a60e18"/></linearGradient><linearGradient id="gD" x1="0" y1="0" x2="1" y2="1"><stop offset="0" stop-color="#c41420"/><stop offset="0.5" stop-color="#c8141c"/><stop offset="1" stop-color="#a00c16"/></linearGradient><linearGradient id="gE" x1="0" y1="0" x2="1" y2="1"><stop offset="0" stop-color="#d21a22"/><stop offset="0.6" stop-color="#c8141c"/><stop offset="1" stop-color="#a60e18"/></linearGradient><linearGradient id="gE2" x1="0" y1="0" x2="0" y2="1"><stop offset="0" stop-color="#8a0a12"/><stop offset="1" stop-color="#8a0a12"/></linearGradient><linearGradient id="rA" x1="0" y1="0" x2="1" y2="1"><stop offset="0" stop-color="#cc161e"/><stop offset="0.5" stop-color="#c41418"/><stop offset="1" stop-color="#a80e16"/></linearGradient><linearGradient id="rB" x1="0" y1="0" x2="1" y2="1"><stop offset="0" stop-color="#940c14"/><stop offset="0.6" stop-color="#a00e16"/><stop offset="1" stop-color="#b41219"/></linearGradient><linearGradient id="rC" x1="0" y1="0" x2="1" y2="0"><stop offset="0" stop-color="#a80e16"/><stop offset="1" stop-color="#c8161e"/></linearGradient><linearGradient id="rD" x1="0" y1="0" x2="1" y2="1"><stop offset="0" stop-color="#e0303a"/><stop offset="0.5" stop-color="#d82630"/><stop offset="1" stop-color="#c01420"/></linearGradient><linearGradient id="rE" x1="0" y1="0" x2="1" y2="0"><stop offset="0" stop-color="#c81820"/><stop offset="0.5" stop-color="#a80e16"/><stop offset="1" stop-color="#900a12"/></linearGradient><linearGradient id="rF" x1="0" y1="0" x2="1" y2="0"><stop offset="0" stop-color="#900a12"/><stop offset="0.6" stop-color="#b41018"/><stop offset="1" stop-color="#d02030"/></linearGradient><linearGradient id="rG" x1="0" y1="0" x2="1" y2="0"><stop offset="0" stop-color="#b8121a"/><stop offset="0.45" stop-color="#c41418"/><stop offset="0.55" stop-color="#c81519"/><stop offset="1" stop-color="#c41418"/></linearGradient><radialGradient id="rH" cx="0.5" cy="0.3" r="0.6"><stop offset="0" stop-color="#d8222c"/><stop offset="1" stop-color="#c41418"/></radialGradient></defs>
</svg>
<svg class="a" style="left:0;top:0" width="800" height="534" viewBox="0 0 800 534">
<defs>
<linearGradient id="blue" x1="0" y1="0" x2="0" y2="1"><stop offset="0" stop-color="#5a9cf8"/><stop offset="1" stop-color="#2f6fe6"/></linearGradient>
<filter id="tb"><feGaussianBlur stdDeviation="0.8"/></filter>
<filter id="tb2"><feGaussianBlur stdDeviation="1.6"/></filter>
</defs>
<!-- dropdown steppers -->
<path d="M769,35 h8.5 a3,3 0 0 1 3,3 v7 a3,3 0 0 1 -3,3 h-8.5 Z" fill="url(#blue)"/>
<path d="M772.2,40.3 L774.75,37.8 L777.3,40.3 M772.2,42.7 L774.75,45.2 L777.3,42.7" fill="none" stroke="#fff" stroke-width="1.1"/>
<path d="M769,186 h8.5 a3,3 0 0 1 3,3 v7 a3,3 0 0 1 -3,3 h-8.5 Z" fill="url(#blue)"/>
<path d="M772.2,191.3 L774.75,188.8 L777.3,191.3 M772.2,193.7 L774.75,196.2 L777.3,193.7" fill="none" stroke="#fff" stroke-width="1.1"/>
<!-- small stepper chevrons -->
<path d="M775.5,228.3 L777.2,226.4 L778.9,228.3 M775.5,230.7 L777.2,232.6 L778.9,230.7" fill="none" stroke="#777" stroke-width="0.8"/>
<path d="M698.6,367.3 L700.25,365.4 L701.9,367.3 M698.6,369.7 L700.25,371.6 L701.9,369.7" fill="none" stroke="#777" stroke-width="0.8"/>
<path d="M774.1,367.3 L775.75,365.4 L777.4,367.3 M774.1,369.7 L775.75,371.6 L777.4,369.7" fill="none" stroke="#777" stroke-width="0.8"/>
<!-- checkbox -->
<rect x="641.7" y="208.5" width="8.6" height="8.6" rx="2" fill="url(#blue)"/>
<path d="M643.8,212.8 L645.5,214.8 L648.5,210.5" fill="none" stroke="#fff" stroke-width="1.2" stroke-linecap="round" stroke-linejoin="round"/>
<!-- pad arrows -->
<g fill="#0a0a0a">
<path d="M705,276.5 L709.5,272.3 L714,276.5 Z M705,281 L709.5,276.8 L714,281 Z"/>
<path d="M703.3,297 L709.5,291 L715.7,297 Z"/>
<path d="M703.3,324.6 L709.5,330.8 L715.7,324.6 Z"/>
<path d="M705,342.3 L709.5,346.5 L714,342.3 Z M705,346.6 L709.5,350.8 L714,346.6 Z"/>
<path d="M695.5,305 L689,311 L695.5,317 Z"/>
<path d="M724.2,305 L730.7,311 L724.2,317 Z"/>
<circle cx="709.5" cy="310.8" r="1.3"/>
<path d="M674.8,307 L670.5,311.3 L674.8,315.6 Z M679.5,307 L675.2,311.3 L679.5,315.6 Z"/>
<path d="M740.8,307 L745.1,311.3 L740.8,315.6 Z M745.5,307 L749.8,311.3 L745.5,315.6 Z"/>
</g>
<!-- thumbnail tulip -->
<g>
<path d="M678,70 L682,66 L684,80 L682,100 L677,104 Z" fill="#1a4a1a" opacity="0.6" filter="url(#tb)"/>
<path d="M709,124 L711.5,124 L717,158 L715,158 Z" fill="#142a14" opacity="0.7"/>
<path d="M696,98 C694,92 700,88 708,89 C716,89 722,93 722,100 L731,93 C730,104 725,116 716,124 C711,128 703,128 698,122 C694,116 694,106 696,98 Z" fill="#a80c10"/>
<path d="M706,94 L711,97 L709,108 L704,106 Z" fill="#e05050" opacity="0.6" filter="url(#tb)"/><path d="M696,106 C700,112 706,118 712,120" stroke="#700808" stroke-width="1.5" fill="none" opacity="0.6"/>
</g>
<!-- filmstrip thumbs -->
<path d="M-2,24 L20,24 C21,30 17,38 10,42 C5,44 0,43 -2,42 Z" fill="#c80c0c" filter="url(#tb)"/>
<path d="M-2,137 C3,138 8,146 9,150 L14,146 C13,158 11,170 5,178 C2,181 -1,181 -2,180 Z" fill="#b80c0c" filter="url(#tb)"/>
<path d="M-2,286 C4,285 10,288 13,296 C14,304 8,313 3,318 L-2,316 Z" fill="#dc2a2e" filter="url(#tb)"/>
<path d="M2,318 L7,358" stroke="#2a302a" stroke-width="1.2"/>
<!-- bottom bits -->
<rect x="0" y="525" width="52" height="1.6" fill="#7a5a3a"/>
<rect x="55" y="523" width="9" height="6" fill="#d0d0d0"/>
</svg>

</body></html>
